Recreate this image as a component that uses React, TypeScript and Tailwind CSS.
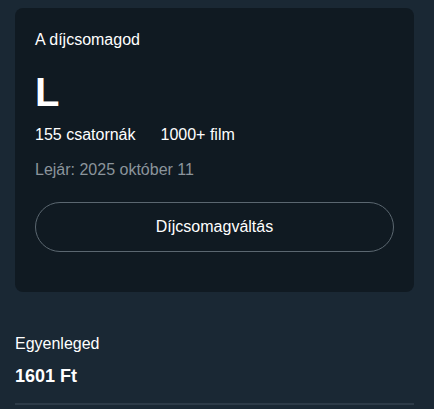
export default function App() {
  return (
    <div className="min-h-[409px] bg-[#1a2834] pl-[15px] pr-5 pt-2 font-['Liberation_Sans',Arial,sans-serif] text-white">
      <div className="rounded-lg bg-[#101a22] px-5 pt-5 pb-10">
        <div className="text-base leading-6">A díjcsomagod</div>
        <div className="mt-5 text-[40px] font-bold leading-10">L</div>
        <div className="mt-[11px] flex text-base leading-6">
          <span>155 csatornák</span>
          <span className="ml-[25px]">1000+ film</span>
        </div>
        <div className="mt-[11px] text-base leading-6 text-[#8b949b]">Lejár: 2025 október 11</div>
        <button className="mt-5 flex h-[50px] w-full items-center justify-center rounded-full border border-[#5b6770] text-base text-white">
          Díjcsomagváltás
        </button>
      </div>
      <div className="mt-10 text-base leading-6">Egyenleged</div>
      <div className="mt-1.5 text-lg font-bold leading-7">1601 Ft</div>
      <div className="mt-[13px] border-t-2 border-[#2d3b48]" />
    </div>
  );
}
